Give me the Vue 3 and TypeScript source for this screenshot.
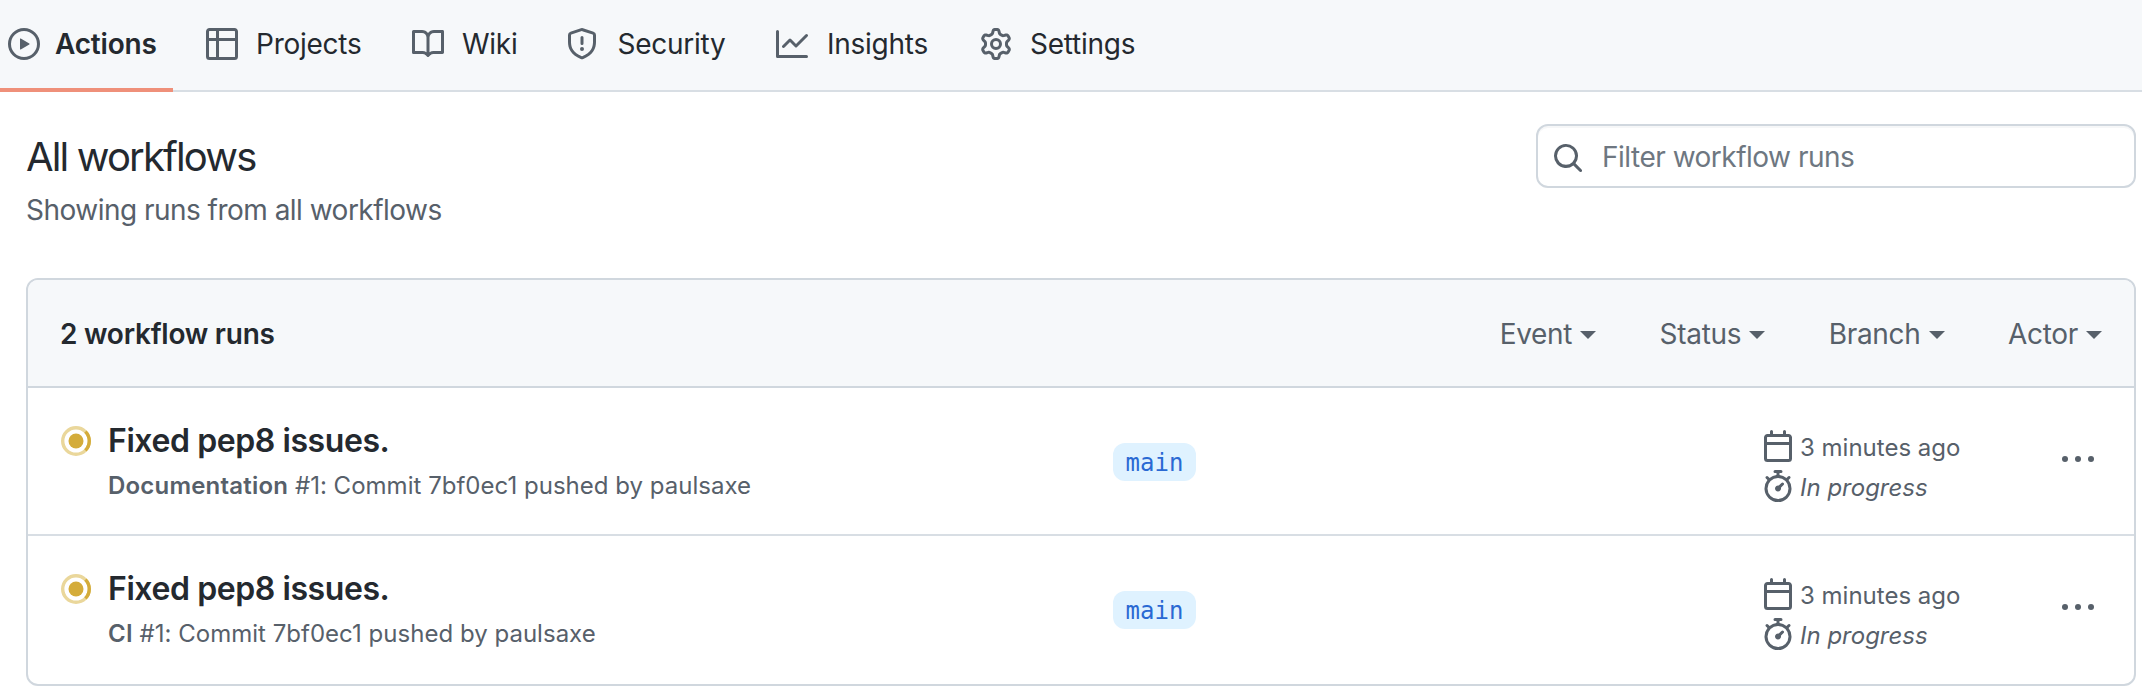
<script setup lang="ts">
interface Tab {
  label: string
  key: string
  path: string
}

interface Run {
  id: number
  title: string
  workflow: string
  detail: string
  branch: string
  started: string
  state: string
}

const tabs: Tab[] = [
  {
    label: 'Actions',
    key: 'actions',
    path: 'M8 0a8 8 0 1 1 0 16A8 8 0 0 1 8 0ZM1.5 8a6.5 6.5 0 1 0 13 0 6.5 6.5 0 0 0-13 0Zm4.879-2.773 4.264 2.559a.25.25 0 0 1 0 .428l-4.264 2.559A.25.25 0 0 1 6 10.559V5.442a.25.25 0 0 1 .379-.215Z',
  },
  {
    label: 'Projects',
    key: 'projects',
    path: 'M0 1.75C0 .784.784 0 1.75 0h12.5C15.216 0 16 .784 16 1.75v12.5A1.75 1.75 0 0 1 14.25 16H1.75A1.75 1.75 0 0 1 0 14.25ZM6.5 6.5v8h7.75a.25.25 0 0 0 .25-.25V6.5Zm8-1.5V1.75a.25.25 0 0 0-.25-.25H6.5V5Zm-13 1.5v7.75c0 .138.112.25.25.25H5v-8ZM5 5V1.5H1.75a.25.25 0 0 0-.25.25V5Z',
  },
  {
    label: 'Wiki',
    key: 'wiki',
    path: 'M0 1.75A.75.75 0 0 1 .75 1h4.253c1.227 0 2.317.59 3 1.501A3.743 3.743 0 0 1 11.006 1h4.245a.75.75 0 0 1 .75.75v10.5a.75.75 0 0 1-.75.75h-4.507a2.25 2.25 0 0 0-1.591.659l-.622.621a.75.75 0 0 1-1.06 0l-.622-.621A2.25 2.25 0 0 0 5.258 13H.75a.75.75 0 0 1-.75-.75Zm7.251 10.324.004-5.073-.002-2.253A2.25 2.25 0 0 0 5.003 2.5H1.5v9h3.757a3.75 3.75 0 0 1 1.994.574ZM8.755 4.75l-.004 7.322a3.752 3.752 0 0 1 1.992-.572H14.5v-9h-3.495a2.25 2.25 0 0 0-2.25 2.25Z',
  },
  {
    label: 'Security',
    key: 'security',
    path: 'M7.467.133a1.748 1.748 0 0 1 1.066 0l5.25 1.68A1.75 1.75 0 0 1 15 3.48V7c0 1.566-.32 3.182-1.303 4.682-.983 1.498-2.585 2.813-5.032 3.855a1.697 1.697 0 0 1-1.33 0c-2.447-1.042-4.049-2.357-5.032-3.855C1.32 10.182 1 8.566 1 7V3.48a1.75 1.75 0 0 1 1.217-1.667Zm.61 1.429a.25.25 0 0 0-.153 0l-5.25 1.68a.25.25 0 0 0-.174.238V7c0 1.358.275 2.666 1.057 3.86.784 1.194 2.121 2.34 4.366 3.297a.196.196 0 0 0 .154 0c2.245-.956 3.582-2.104 4.366-3.298C13.225 9.666 13.5 8.36 13.5 7V3.48a.251.251 0 0 0-.174-.237l-5.25-1.68ZM8.75 4.75v3a.75.75 0 0 1-1.5 0v-3a.75.75 0 0 1 1.5 0ZM9 10.5a1 1 0 1 1-2 0 1 1 0 0 1 2 0Z',
  },
  {
    label: 'Insights',
    key: 'insights',
    path: 'M1.5 1.75V13.5h13.75a.75.75 0 0 1 0 1.5H.75a.75.75 0 0 1-.75-.75V1.75a.75.75 0 0 1 1.5 0Zm14.28 2.53-5.25 5.25a.75.75 0 0 1-1.06 0L7 7.06 4.28 9.78a.751.751 0 0 1-1.042-.018.751.751 0 0 1-.018-1.042l3.25-3.25a.75.75 0 0 1 1.06 0L10 7.94l4.72-4.72a.751.751 0 0 1 1.042.018.751.751 0 0 1 .018 1.042Z',
  },
  {
    label: 'Settings',
    key: 'settings',
    path: 'M8 0a8.2 8.2 0 0 1 .701.031C9.444.095 9.99.645 10.16 1.29l.288 1.107c.018.066.079.158.212.224.231.114.454.243.668.386.123.082.233.09.299.071l1.103-.303c.644-.176 1.392.021 1.82.63.27.385.506.792.704 1.218.315.675.111 1.422-.364 1.891l-.814.806c-.049.048-.098.147-.088.294.016.257.016.515 0 .772-.01.147.038.246.088.294l.814.806c.475.469.679 1.216.364 1.891a7.977 7.977 0 0 1-.704 1.217c-.428.61-1.176.807-1.82.63l-1.102-.302c-.067-.019-.177-.011-.3.071a5.909 5.909 0 0 1-.668.386c-.133.066-.194.158-.211.224l-.29 1.106c-.168.646-.715 1.196-1.458 1.26a8.006 8.006 0 0 1-1.402 0c-.743-.064-1.289-.614-1.458-1.26l-.289-1.106c-.018-.066-.079-.158-.212-.224a5.738 5.738 0 0 1-.668-.386c-.123-.082-.233-.09-.299-.071l-1.103.303c-.644.176-1.392-.021-1.82-.63a8.12 8.12 0 0 1-.704-1.218c-.315-.675-.111-1.422.363-1.891l.815-.806c.05-.048.098-.147.088-.294a6.214 6.214 0 0 1 0-.772c.01-.147-.038-.246-.088-.294l-.815-.806C.635 6.045.431 5.298.746 4.623a7.92 7.92 0 0 1 .704-1.217c.428-.61 1.176-.807 1.82-.63l1.102.302c.067.019.177.011.3-.071.214-.143.437-.272.668-.386.133-.066.194-.158.211-.224l.29-1.106C6.009.645 6.556.095 7.299.03 7.53.01 7.764 0 8 0Zm-.571 1.525c-.036.003-.108.036-.137.146l-.289 1.105c-.147.561-.549.967-.998 1.189-.173.086-.34.183-.5.29-.417.278-.97.423-1.529.27l-1.103-.303c-.109-.03-.175.016-.195.045-.22.312-.412.644-.573.99-.014.031-.021.11.059.19l.815.806c.411.406.562.957.53 1.456a4.709 4.709 0 0 0 0 .582c.032.499-.119 1.05-.53 1.456l-.815.806c-.081.08-.073.159-.059.19.162.346.353.677.573.989.02.03.085.076.195.046l1.102-.303c.56-.153 1.113-.008 1.53.27.161.107.328.204.501.29.447.222.85.629.997 1.189l.289 1.105c.029.109.101.143.137.146a6.6 6.6 0 0 0 1.142 0c.036-.003.108-.036.137-.146l.289-1.105c.147-.561.549-.967.998-1.189.173-.086.34-.183.5-.29.417-.278.97-.423 1.529-.27l1.103.303c.109.029.175-.016.195-.045.22-.313.411-.644.573-.99.014-.031.021-.11-.059-.19l-.815-.806c-.411-.406-.562-.957-.53-1.456a4.709 4.709 0 0 0 0-.582c-.032-.499.119-1.05.53-1.456l.815-.806c.081-.08.073-.159.059-.19a6.464 6.464 0 0 0-.573-.989c-.02-.03-.085-.076-.195-.046l-1.102.303c-.56.153-1.113.008-1.53-.27a4.44 4.44 0 0 0-.501-.29c-.447-.222-.85-.629-.997-1.189l-.289-1.105c-.029-.11-.101-.143-.137-.146a6.6 6.6 0 0 0-1.142 0ZM11 8a3 3 0 1 1-6 0 3 3 0 0 1 6 0ZM9.5 8a1.5 1.5 0 1 0-3.001.001A1.5 1.5 0 0 0 9.5 8Z',
  },
]

const searchPath =
  'M10.68 11.74a6 6 0 0 1-7.922-8.982 6 6 0 0 1 8.982 7.922l3.04 3.04a.749.749 0 0 1-.326 1.275.749.749 0 0 1-.734-.215ZM11.5 7a4.499 4.499 0 1 0-8.997 0A4.499 4.499 0 0 0 11.5 7Z'
const calendarPath =
  'M4.75 0a.75.75 0 0 1 .75.75V2h5V.75a.75.75 0 0 1 1.5 0V2h1.25c.966 0 1.75.784 1.75 1.75v10.5A1.75 1.75 0 0 1 13.25 16H2.75A1.75 1.75 0 0 1 1 14.25V3.75C1 2.784 1.784 2 2.75 2H4V.75A.75.75 0 0 1 4.75 0ZM2.5 7.5v6.75c0 .138.112.25.25.25h10.5a.25.25 0 0 0 .25-.25V7.5Zm10.75-4H2.75a.25.25 0 0 0-.25.25V6h11V3.75a.25.25 0 0 0-.25-.25Z'
const stopwatchPath =
  'M5.75.75A.75.75 0 0 1 6.5 0h3a.75.75 0 0 1 0 1.5h-.75v1l-.001.041a6.724 6.724 0 0 1 3.464 1.435l.007-.006.75-.75a.749.749 0 0 1 1.275.326.749.749 0 0 1-.215.734l-.75.75-.006.007a6.75 6.75 0 1 1-10.548 0L2.72 5.03l-.75-.75a.751.751 0 0 1 .018-1.042.751.751 0 0 1 1.042-.018l.75.75.007.006A6.72 6.72 0 0 1 7.25 2.541V1.5H6.5a.75.75 0 0 1-.75-.75ZM8 14.5a5.25 5.25 0 1 0 0-10.5 5.25 5.25 0 0 0 0 10.5Zm.389-6.7 1.33-1.33a.75.75 0 1 1 1.061 1.06L9.45 8.861A1.503 1.503 0 0 1 8 10.75a1.499 1.499 0 1 1 .389-2.95Z'

const filters: string[] = ['Event', 'Status', 'Branch', 'Actor']

const runs: Run[] = [
  {
    id: 1,
    title: 'Fixed pep8 issues.',
    workflow: 'Documentation',
    detail: '#1: Commit 7bf0ec1 pushed by paulsaxe',
    branch: 'main',
    started: '3 minutes ago',
    state: 'In progress',
  },
  {
    id: 2,
    title: 'Fixed pep8 issues.',
    workflow: 'CI',
    detail: '#1: Commit 7bf0ec1 pushed by paulsaxe',
    branch: 'main',
    started: '3 minutes ago',
    state: 'In progress',
  },
]
</script>

<template>
  <div class="page">
    <nav class="tabs">
      <a v-for="(tab, i) in tabs" :key="tab.key" class="tab" :class="[tab.key, { active: i === 0 }]">
        <svg class="icon" viewBox="0 0 16 16"><path :d="tab.path" /></svg>
        <span class="tab-label">{{ tab.label }}</span>
      </a>
    </nav>

    <main class="content">
      <header class="head">
        <div class="heading">
          <h1>All workflows</h1>
          <p>Showing runs from all workflows</p>
        </div>
        <div class="search">
          <svg class="icon" viewBox="0 0 16 16"><path :d="searchPath" /></svg>
          <span class="placeholder">Filter workflow runs</span>
        </div>
      </header>

      <section class="box">
        <div class="box-header">
          <strong class="count">2 workflow runs</strong>
          <div class="filters">
            <span v-for="name in filters" :key="name" class="filter">
              <span>{{ name }}</span>
              <i class="caret"></i>
            </span>
          </div>
        </div>

        <article v-for="run in runs" :key="run.id" class="run">
          <svg class="status" viewBox="0 0 32 32">
            <circle cx="16" cy="16" r="13.3" fill="none" stroke="#ead79b" stroke-width="3.4" />
            <path d="M25.4 6.6A13.3 13.3 0 0 1 25.4 25.4" fill="none" stroke="#d4ac3a" stroke-width="3.4" />
            <circle cx="16" cy="16" r="7.5" fill="#d4ac3a" />
          </svg>
          <div class="summary">
            <div class="run-title">{{ run.title }}</div>
            <div class="run-detail"><b>{{ run.workflow }}</b> {{ run.detail }}</div>
          </div>
          <div class="branch-cell"><span class="branch-tag">{{ run.branch }}</span></div>
          <div class="meta">
            <div class="meta-line">
              <svg class="icon" viewBox="0 0 16 16"><path :d="calendarPath" /></svg>
              <span class="started">{{ run.started }}</span>
            </div>
            <div class="meta-line">
              <svg class="icon" viewBox="0 0 16 16"><path :d="stopwatchPath" /></svg>
              <em>{{ run.state }}</em>
            </div>
          </div>
          <svg class="more" viewBox="0 0 32 6">
            <circle cx="3" cy="3" r="3" />
            <circle cx="16" cy="3" r="3" />
            <circle cx="29" cy="3" r="3" />
          </svg>
        </article>
      </section>
    </main>
  </div>
</template>

<style>
html,
body {
  margin: 0;
  background: #fff;
}
</style>

<style scoped>
.page {
  box-sizing: border-box;
  width: 2142px;
  height: 698px;
  overflow: hidden;
  background: #fff;
  color: #24292f;
  font-family: Inter, 'Liberation Sans', sans-serif;
  font-size: 28px;
  white-space: nowrap;
}

.page * {
  box-sizing: border-box;
}

.icon {
  display: block;
  flex: none;
  width: 32px;
  height: 32px;
  fill: #57606a;
}

.tabs {
  display: grid;
  grid-template-columns: 173px 206px 154px 210px 204px 200px;
  height: 92px;
  background: #f6f8fa;
  box-shadow: inset 0 -2px #d8dee4;
}

.tab {
  display: flex;
  align-items: center;
  height: 92px;
  padding-bottom: 4px;
  padding-left: 33px;
  gap: 18px;
  letter-spacing: -0.25px;
}

.tab.security {
  gap: 19.5px;
}

.tab.insights {
  gap: 19px;
}

.tab.active {
  padding-left: 8px;
  padding-bottom: 0;
  gap: 15px;
  border-bottom: 4px solid #ef907a;
  font-weight: 600;
  letter-spacing: -0.2px;
}

.tab-label {
  line-height: 32px;
}

.content {
  padding: 32px 6px 0 26px;
}

.head {
  display: flex;
  align-items: flex-start;
  justify-content: space-between;
  height: 154px;
}

.heading h1 {
  margin: 9px 0 0;
  font-size: 40px;
  font-weight: 400;
  line-height: 48px;
  letter-spacing: -1.85px;
}

.heading p {
  margin: 8px 0 0;
  color: #57606a;
  line-height: 42px;
  letter-spacing: -0.52px;
}

.search {
  display: flex;
  align-items: center;
  width: 600px;
  height: 64px;
  padding: 0 14px 0 14px;
  gap: 18px;
  border: 2px solid #d0d7de;
  border-radius: 12px;
  box-shadow: inset 0 2px rgba(208, 215, 222, 0.2);
}

.search .icon {
  margin-top: 4px;
}

.placeholder {
  padding-top: 2px;
  color: #6e7781;
  letter-spacing: -0.5px;
}

.box {
  height: 408px;
  border: 2px solid #d0d7de;
  border-radius: 12px;
  overflow: hidden;
}

.box-header {
  display: flex;
  align-items: center;
  justify-content: space-between;
  height: 108px;
  padding: 2px 32px 0;
  border-bottom: 2px solid #d0d7de;
  background: #f6f8fa;
}

.count {
  font-weight: 600;
  letter-spacing: -0.24px;
}

.filters {
  display: flex;
  gap: 63.4px;
  color: #57606a;
  letter-spacing: -0.3px;
}

.filter {
  display: flex;
  align-items: center;
  gap: 8px;
}

.caret {
  border: 8px solid transparent;
  border-top-color: #57606a;
  border-bottom: 0;
  margin-top: 2px;
}

.run {
  display: grid;
  grid-template-columns: 48px 1005px 649px 300px 32px;
  align-items: start;
  height: 148px;
  padding: 0 32px;
  border-bottom: 2px solid #d8dee4;
}

.run:last-child {
  border-bottom: 0;
}

.status {
  display: block;
  width: 32px;
  height: 32px;
  margin-top: 37px;
}

.summary {
  padding-top: 29px;
}

.run-title {
  font-size: 32px;
  font-weight: 600;
  line-height: 48px;
  letter-spacing: -0.42px;
}

.run-detail {
  margin-top: 3px;
  color: #57606a;
  font-size: 24px;
  line-height: 36px;
  letter-spacing: 0.02px;
}

.run-detail b {
  font-weight: 600;
  letter-spacing: 0.2px;
}

.branch-cell {
  padding-top: 55px;
}

.branch-tag {
  display: block;
  width: 83px;
  height: 38px;
  border-radius: 12px;
  background: #dff2ff;
  color: #2a69d3;
  font-family: 'DejaVu Sans Mono', 'Liberation Mono', monospace;
  font-size: 24px;
  line-height: 40px;
  text-align: center;
}

.meta {
  padding-top: 42px;
  color: #57606a;
  font-size: 24px;
}

.meta-line {
  display: flex;
  align-items: center;
  height: 32px;
  margin-bottom: 8px;
  gap: 6px;
}

.started,
.meta em {
  padding-top: 2px;
}

.more {
  width: 32px;
  height: 6px;
  margin-top: 68px;
  fill: #57606a;
}
</style>
